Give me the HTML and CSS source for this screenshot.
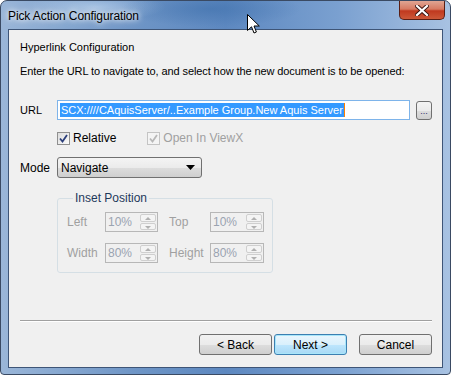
FILE: index.html
```html
<!DOCTYPE html>
<html lang="en">

<head>
    <meta charset="UTF-8" />
    <title>Pick Action Configuration</title>
    <link rel="stylesheet" href="styles.css">
</head>

<body>
    <div class="window">
        <div class="titlebar">
            <span class="title">Pick Action Configuration</span>
            <div class="close-btn">
                <svg width="14" height="11" viewBox="0 0 14 11">
                    <path d="M2 1 L12 10 M12 1 L2 10" stroke="#3a1410" stroke-width="4" stroke-linecap="square" />
                    <path d="M2 1 L12 10 M12 1 L2 10" stroke="#ffffff" stroke-width="2.2" stroke-linecap="square" />
                </svg>
            </div>
        </div>

        <div class="client">
            <div class="heading">Hyperlink Configuration</div>
            <div class="intro">Enter the URL to navigate to, and select how the new document is to be opened:</div>

            <div class="row url-row">
                <label class="field-label">URL</label>
                <div class="url-input"><span class="selected">SCX:////CAquisServer/..Example Group.New Aquis Server</span><span class="caret"></span></div>
                <div class="browse-btn">...</div>
            </div>

            <div class="checks">
                <div class="check">
                    <span class="box checked">
                        <svg width="9" height="9" viewBox="0 0 9 9"><path d="M1 4.5 L3.5 7.5 L8 1" fill="none" stroke="#2b3e7a" stroke-width="1.8" /></svg>
                    </span>
                    <span>Relative</span>
                </div>
                <div class="check disabled">
                    <span class="box">
                        <svg width="9" height="9" viewBox="0 0 9 9"><path d="M1 4.5 L3.5 7.5 L8 1" fill="none" stroke="#b8b8b8" stroke-width="1.8" /></svg>
                    </span>
                    <span>Open In ViewX</span>
                </div>
            </div>

            <div class="row mode-row">
                <label class="field-label">Mode</label>
                <div class="select">
                    <span>Navigate</span>
                    <svg width="9" height="5" viewBox="0 0 9 5"><path d="M0 0 H9 L4.5 5 Z" fill="#000" /></svg>
                </div>
            </div>

            <fieldset class="group">
                <legend>Inset Position</legend>
                <div class="spin-grid">
                    <span class="spin-label">Left</span>
                    <div class="spin"><span class="spin-value">10%</span><span class="spin-btns"><i class="up"></i><i class="down"></i></span></div>
                    <span class="spin-label second">Top</span>
                    <div class="spin"><span class="spin-value">10%</span><span class="spin-btns"><i class="up"></i><i class="down"></i></span></div>
                    <span class="spin-label">Width</span>
                    <div class="spin"><span class="spin-value">80%</span><span class="spin-btns"><i class="up"></i><i class="down"></i></span></div>
                    <span class="spin-label second">Height</span>
                    <div class="spin"><span class="spin-value">80%</span><span class="spin-btns"><i class="up"></i><i class="down"></i></span></div>
                </div>
            </fieldset>

            <div class="spacer"></div>
            <div class="separator"></div>

            <div class="buttons">
                <button class="btn">&lt; Back</button>
                <button class="btn default">Next &gt;</button>
                <button class="btn cancel">Cancel</button>
            </div>
        </div>

        <svg class="cursor" width="13" height="21" viewBox="0 0 13 21">
            <path d="M0.5 0.5 V16.5 L4.5 12.8 L7 19 L9.4 18 L7 12 H12.3 Z" fill="#fff" stroke="#000" stroke-width="1" />
        </svg>
    </div>
</body>

</html>
```

FILE: styles.css
```css
body {
    margin: 0;
    font-family: "Liberation Sans", Arial, sans-serif;
    font-size: 11px;
    color: #000;
    background: #fff;
}

.window {
    position: relative;
    width: 451px;
    height: 375px;
    box-sizing: border-box;
    border: 1px solid #3a4a63;
    border-radius: 7px 7px 4px 4px;
    background:
        radial-gradient(ellipse 90px 18px at 210px 8px, rgba(60, 110, 170, 0.55), transparent),
        radial-gradient(ellipse 70px 14px at 95px 6px, rgba(210, 230, 250, 0.5), transparent),
        linear-gradient(to right, #9ab6d8 0%, #6e95c6 30%, #5d88c0 50%, #7aa0d0 75%, #a8c2e2 100%);
    padding: 0 7px 6px 7px;
    overflow: hidden;
}

.titlebar {
    display: flex;
    align-items: flex-start;
    justify-content: space-between;
    height: 28px;
}

.title {
    font-family: "Liberation Sans", Arial, sans-serif;
    font-size: 12px;
    letter-spacing: -0.1px;
    color: #000;
    margin-top: 8px;
    text-shadow: 0 0 8px #fff, 0 0 5px #fff;
}

.close-btn {
    width: 46px;
    height: 19px;
    margin-right: -2px;
    box-sizing: border-box;
    border: 1px solid #5a1e14;
    border-top: none;
    border-radius: 0 0 5px 5px;
    background: linear-gradient(#e0a593 0%, #d77a62 45%, #c0391f 55%, #cc5838 100%);
    display: flex;
    align-items: center;
    justify-content: center;
}

.client {
    height: 339px;
    box-sizing: border-box;
    border: 1px solid #3e5577;
    background: #f0f0f0;
    padding: 0 10px 0 11px;
    display: flex;
    flex-direction: column;
}

.heading {
    margin-top: 11px;
    line-height: 13px;
}

.intro {
    margin-top: 11px;
    line-height: 13px;
    letter-spacing: -0.1px;
}

.row {
    display: flex;
    align-items: center;
}

.field-label {
    width: 37px;
}

.url-row {
    margin-top: 22px;
}

.url-input {
    width: 353px;
    height: 20px;
    box-sizing: border-box;
    border: 1px solid #7eb4ea;
    background: #fff;
    padding: 2px 2px 0 2px;
    display: flex;
    align-items: flex-start;
}

.selected {
    background: #3399ff;
    color: #fff;
    line-height: 14px;
    padding: 0 1px;
}

.caret {
    width: 1px;
    height: 14px;
    background: #ff8000;
}

.browse-btn {
    width: 16px;
    height: 19px;
    margin-left: 6px;
    box-sizing: border-box;
    border: 1px solid #707070;
    border-radius: 3px;
    background: linear-gradient(#f4f4f4 0%, #ebebeb 50%, #dddddd 51%, #cfcfcf 100%);
    font-size: 9px;
    text-align: center;
    line-height: 18px;
    color: #2b2b6a;
}

.checks {
    display: flex;
    margin-top: 11px;
    margin-left: 37px;
    gap: 31px;
}

.check {
    display: flex;
    align-items: center;
    gap: 3px;
    font-size: 12px;
}

.check.disabled {
    color: #a0a0a0;
}

.box {
    width: 13px;
    height: 13px;
    box-sizing: border-box;
    border: 1px solid #8f8f8f;
    background: linear-gradient(135deg, #dcdcdc, #fbfbfb);
    display: flex;
    align-items: center;
    justify-content: center;
}

.check.disabled .box {
    border-color: #c4c4c4;
    background: #f4f4f4;
}

.mode-row {
    margin-top: 12px;
}

.mode-row .field-label {
    font-size: 12px;
}

.select {
    width: 145px;
    height: 21px;
    box-sizing: border-box;
    border: 1px solid #707070;
    border-radius: 3px;
    background: linear-gradient(#f4f4f4 0%, #ebebeb 50%, #dddddd 51%, #cfcfcf 100%);
    display: flex;
    align-items: center;
    justify-content: space-between;
    padding: 0 6px 0 3px;
    font-size: 12px;
}

.group {
    margin: 13px 0 0 37px;
    width: 216px;
    box-sizing: border-box;
    border: 1px solid #d5dfe5;
    border-radius: 3px;
    padding: 7px 8px 9px 9px;
    color: #a0a0a0;
}

.group legend {
    color: #1e395b;
    padding: 0 2px;
    margin-left: 6px;
    font-size: 12px;
}

.spin-grid {
    display: grid;
    grid-template-columns: 38px 53px 52px 54px;
    row-gap: 11px;
    align-items: center;
    font-size: 12px;
}

.spin-label {
    color: #a0a0a0;
}

.spin-label.second {
    margin-left: 11px;
}

.spin {
    height: 20px;
    box-sizing: border-box;
    border: 1px solid #b7b7b7;
    background: #f0f0f0;
    display: flex;
    justify-content: space-between;
}

.spin-value {
    color: #9aa3b0;
    padding: 2px 0 0 2px;
}

.spin-btns {
    width: 16px;
    display: flex;
    flex-direction: column;
    padding: 1px;
    gap: 1px;
}

.spin-btns i {
    flex: 1;
    border: 1px solid #cfcfcf;
    border-radius: 2px;
    background: #f4f4f4;
    position: relative;
}

.spin-btns i::after {
    content: "";
    position: absolute;
    left: 4px;
    top: 2px;
    border-left: 3px solid transparent;
    border-right: 3px solid transparent;
}

.spin-btns .up::after {
    border-bottom: 3px solid #b0b0b0;
}

.spin-btns .down::after {
    border-top: 3px solid #b0b0b0;
}

.spacer {
    flex: 1;
}

.separator {
    height: 0;
    border-top: 1px solid #a0a0a0;
    border-bottom: 1px solid #fff;
}

.buttons {
    display: flex;
    justify-content: flex-end;
    margin: 12px 0 12px;
}

.btn {
    width: 73px;
    height: 21px;
    box-sizing: border-box;
    border: 1px solid #707070;
    border-radius: 3px;
    background: linear-gradient(#f2f2f2 0%, #ebebeb 50%, #dddddd 51%, #cfcfcf 100%);
    font-family: "Liberation Sans", Arial, sans-serif;
    font-size: 12px;
    color: #000;
    padding: 0;
    margin-left: 2px;
}

.btn.default {
    border-color: #3c7fb1;
    box-shadow: inset 0 0 0 1px #a8e6fa;
    background: linear-gradient(#eaf6fd 0%, #d9f0fc 50%, #bee6fd 51%, #a7d9f5 100%);
}

.btn.cancel {
    margin-left: 12px;
}

.cursor {
    position: absolute;
    left: 246px;
    top: 13px;
}
```
